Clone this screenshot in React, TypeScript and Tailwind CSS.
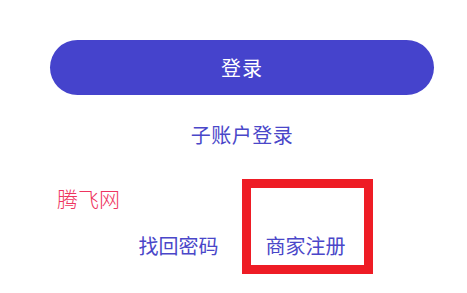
export default function App() {
  return (
    <div className="relative w-[467px] h-[293px] bg-white overflow-hidden font-['Noto_Sans_CJK_SC',sans-serif]">
      <div className="w-[384px] ml-[50px] pt-[40px] flex flex-col items-center">
        <button className="w-full h-[55px] rounded-full bg-[#4543cc] text-white text-[20px] leading-[28px] tracking-[1px]">
          登录
        </button>
        <div className="mt-[26px] text-[20px] leading-[28px] text-[#4a47c9] tracking-[0.5px]">子账户登录</div>
        <div className="mt-[83px] flex gap-[47px] text-[20px] leading-[28px] text-[#4a47c9]">
          <span>找回密码</span>
          <span>商家注册</span>
        </div>
      </div>

      {/* annotation overlays */}
      <div className="absolute left-[57px] top-[184px] text-[21px] leading-[28px] text-[#ee3560] font-light">腾飞网</div>
      <div className="absolute left-[242px] top-[179px] w-[131px] h-[95px] border-[9px] border-[#ee1c25]" />
    </div>
  );
}
